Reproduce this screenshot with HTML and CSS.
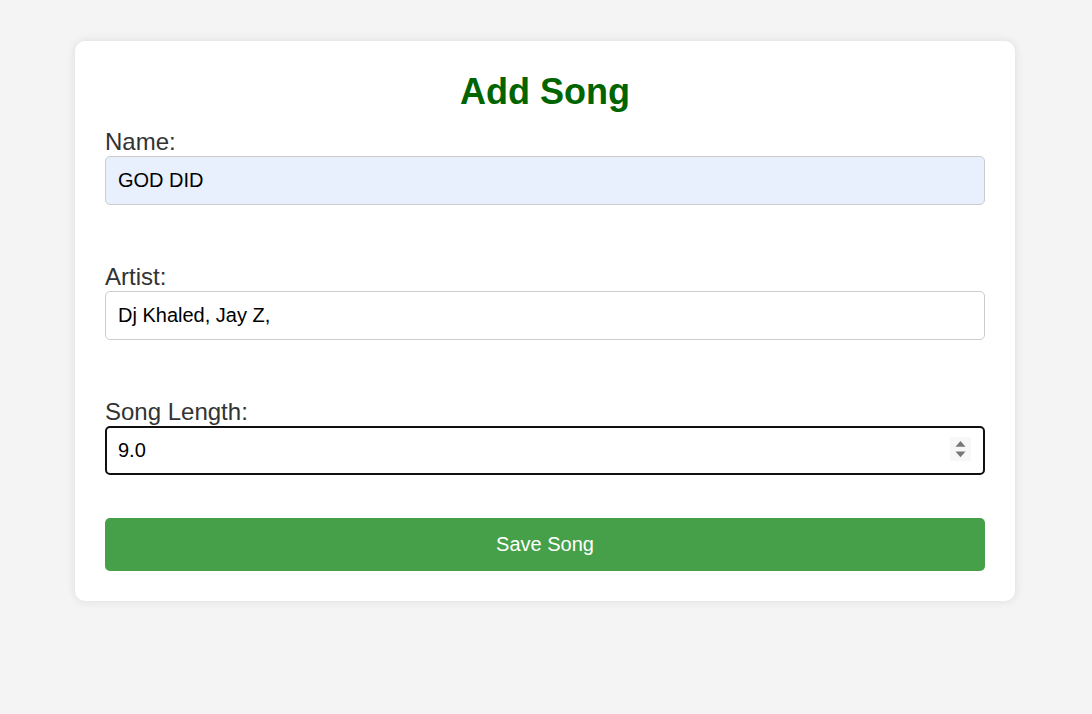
FILE: index.html
```html
<!DOCTYPE html>
<html lang="en">
<head>
<meta charset="utf-8">
<title>Add Song</title>
<link rel="stylesheet" href="styles.css">
</head>
<body>
<div class="card">
  <h1 class="title">Add Song</h1>
  <form class="form">
    <div class="field">
      <label class="label" for="name">Name:</label>
      <input class="input autofill" id="name" type="text" value="GOD DID">
    </div>
    <div class="field">
      <label class="label" for="artist">Artist:</label>
      <input class="input" id="artist" type="text" value="Dj Khaled, Jay Z,">
    </div>
    <div class="field">
      <label class="label" for="length">Song Length:</label>
      <div class="number-wrap">
        <input class="input focused" id="length" type="text" value="9.0">
        <span class="spinner">
          <svg width="21" height="24" viewBox="0 0 21 24">
            <rect x="0" y="0" width="21" height="24" fill="#f7f7f7"/>
            <path d="M10.5 4 L15.5 9.8 L5.5 9.8 Z" fill="#777777"/>
            <path d="M10.5 20.2 L15.5 14.5 L5.5 14.5 Z" fill="#777777"/>
          </svg>
        </span>
      </div>
    </div>
    <button class="button" type="button">Save Song</button>
  </form>
</div>
</body>
</html>
```

FILE: styles.css
```css
html, body {
  margin: 0;
  padding: 0;
}
body {
  background: #f4f4f4;
  font-family: "Liberation Sans", Arial, sans-serif;
  min-height: 714px;
}
.card {
  box-sizing: border-box;
  width: 940px;
  margin: 41px 0 0 75px;
  padding: 30px;
  background: #ffffff;
  border-radius: 10px;
  box-shadow: 0 0 10px rgba(0, 0, 0, 0.1);
}
.title {
  margin: 0 0 15px;
  text-align: center;
  color: #006400;
  font-size: 36px;
  font-weight: bold;
  line-height: normal;
}
.form {
  display: flex;
  flex-direction: column;
}
.field {
  display: flex;
  flex-direction: column;
  margin-bottom: 58px;
}
.field:nth-child(3) {
  margin-bottom: 43px;
}
.label {
  font-size: 24px;
  color: #333333;
  line-height: normal;
}
.input {
  box-sizing: border-box;
  width: 100%;
  height: 49px;
  padding: 0 12px;
  border: 1px solid #cccccc;
  border-radius: 5px;
  font-family: "Liberation Sans", Arial, sans-serif;
  font-size: 20px;
  color: #000000;
  background: #ffffff;
  outline: none;
}
.autofill {
  background: #e8f0fe;
}
.number-wrap {
  position: relative;
}
.focused {
  border: 2px solid #101010;
  padding: 0 11px;
}
.spinner {
  position: absolute;
  right: 14px;
  top: 11px;
  width: 21px;
  height: 24px;
  display: block;
}
.spinner svg {
  display: block;
}
.button {
  height: 53px;
  width: 100%;
  border: none;
  border-radius: 5px;
  background: #46a049;
  color: #ffffff;
  font-family: "Liberation Sans", Arial, sans-serif;
  font-size: 20px;
  cursor: pointer;
}
```
